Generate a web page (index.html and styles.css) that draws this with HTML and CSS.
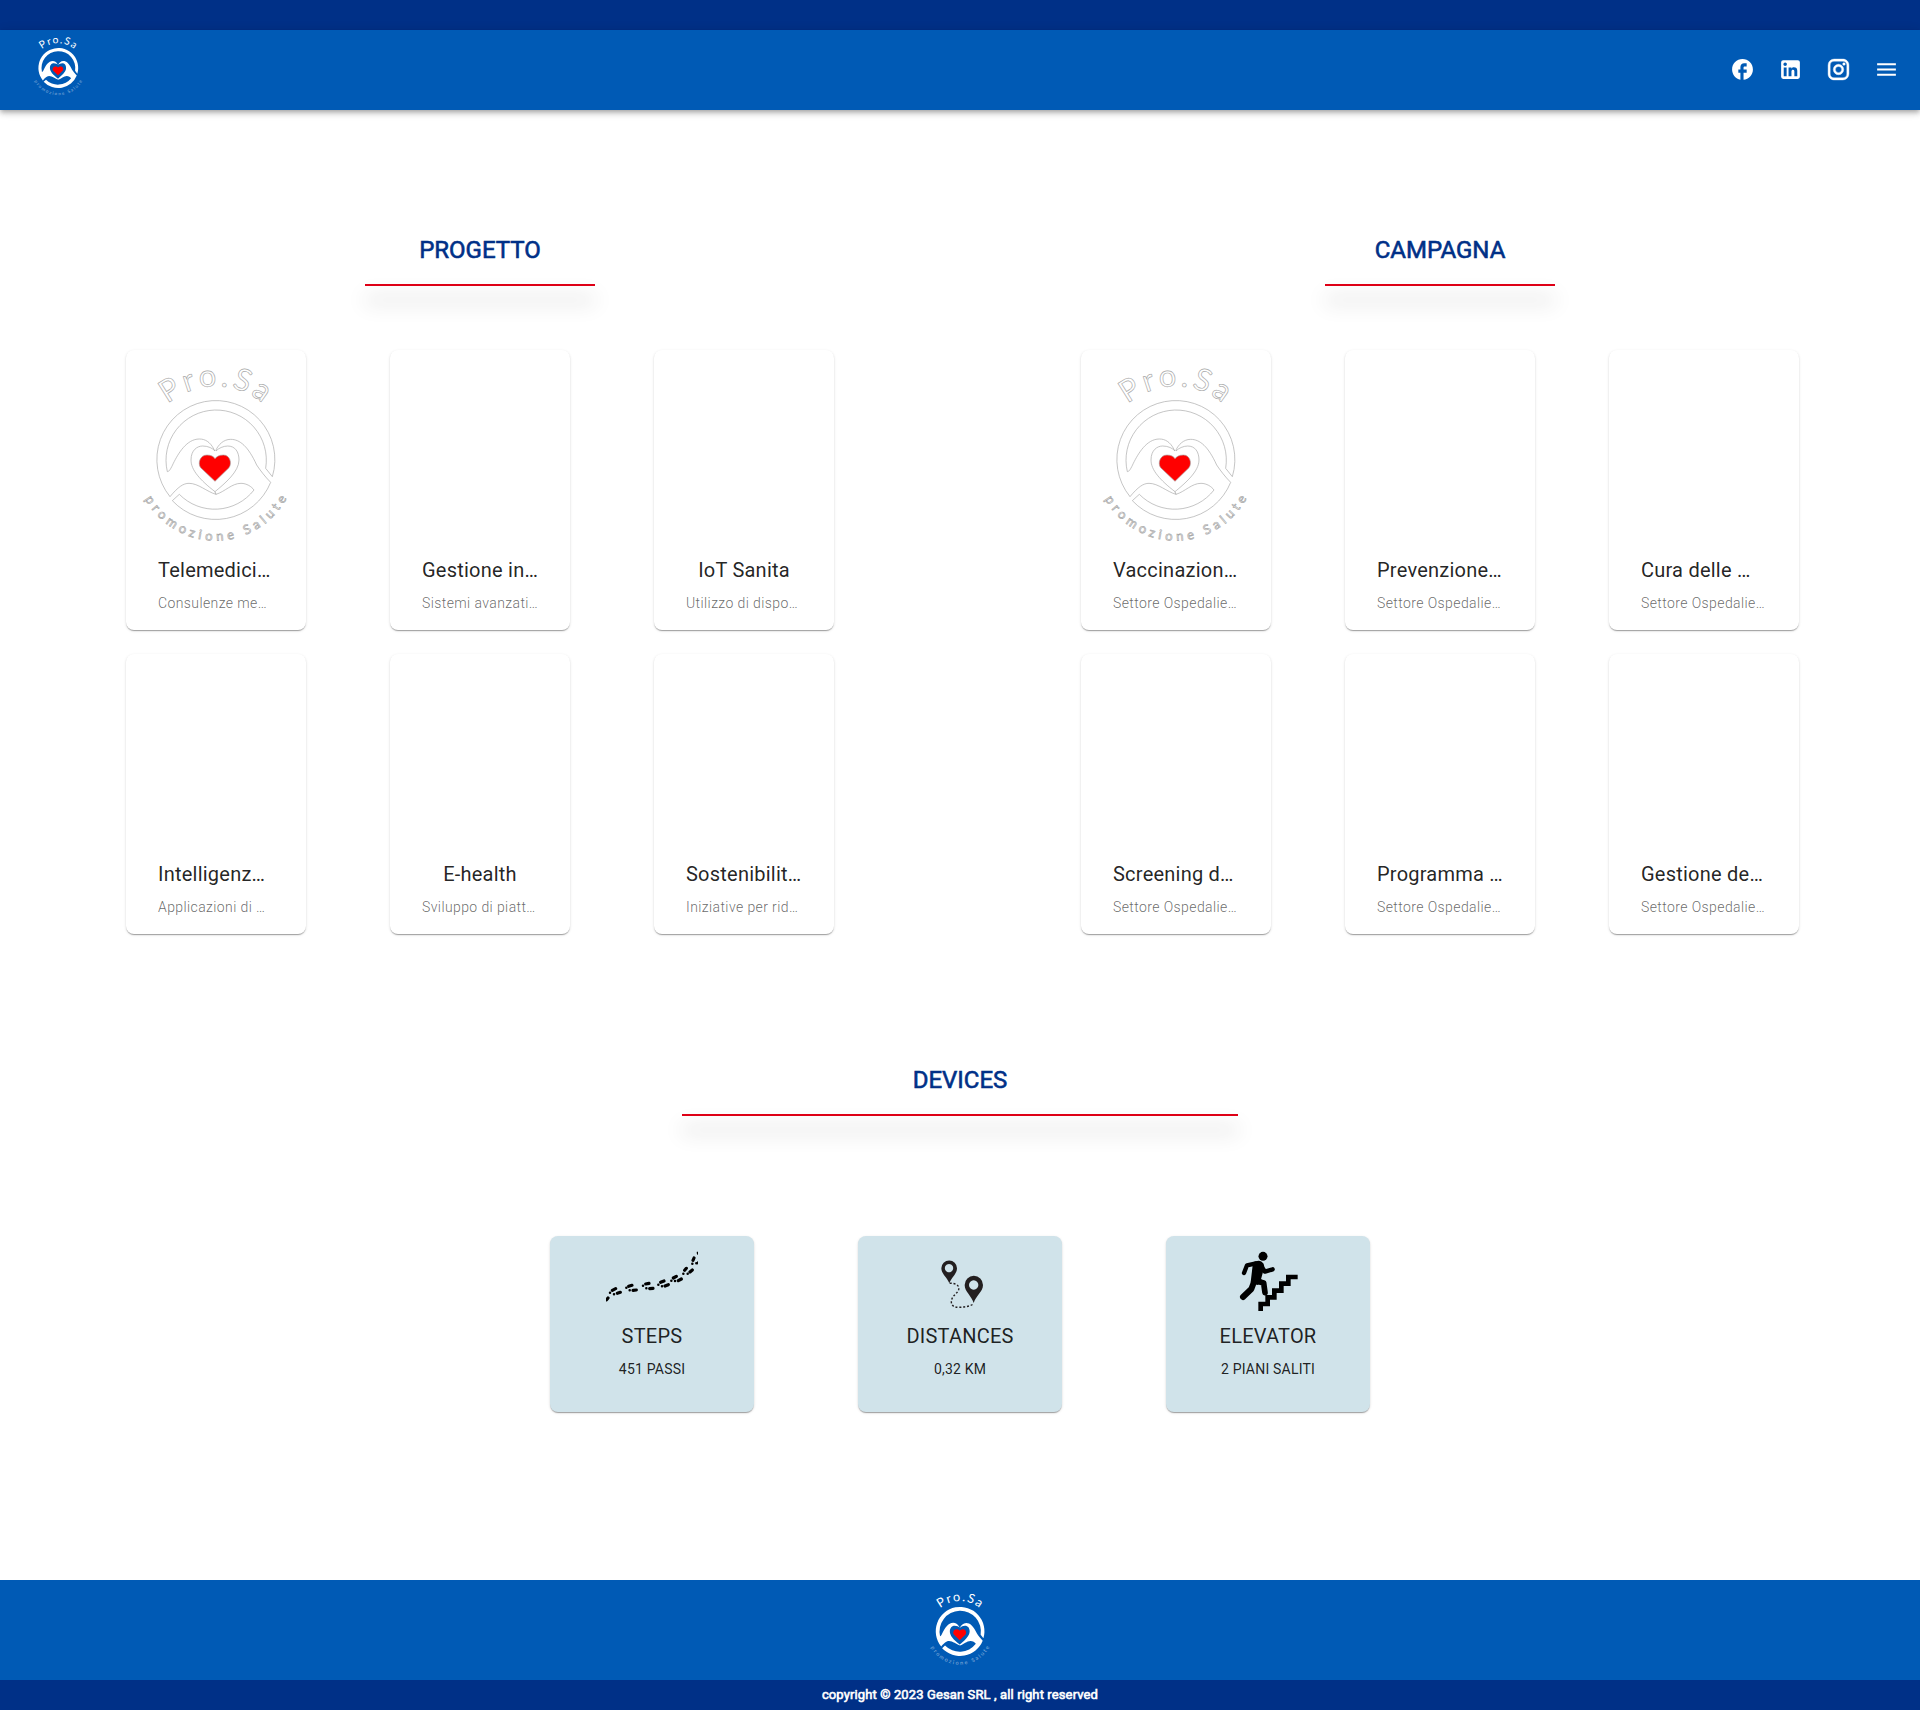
FILE: index.html
```html
<!DOCTYPE html>
<html lang="it">
<head>
<meta charset="utf-8">
<title>Pro.Sa</title>
<link rel="stylesheet" href="styles.css">
</head>
<body>
<svg class="defs" width="0" height="0" aria-hidden="true">
  <defs>
    <path id="arc-top" d="M96 360A221 221 0 0 1 538 360"/>
    <path id="arc-bottom" d="M75 360A242 242 0 0 0 559 360"/>
    <symbol id="logo" viewBox="48 30 540 600" overflow="visible">
      <path class="mark" d="M487 410A177 177 0 1 0 180 470C205 440 220 430 237 430C265 430 290 455 318 463L315 455C270 420 243 390 243 360C243 330 262 318 278 318C295 318 308 325 315 333L312 328C300 305 285 297 268 297C230 297 205 340 190 370C183 385 178 395 172 395A150.500 150.500 0 1 1 467 385Z"/>
      <path class="mark" d="M318 463C345 455 365 430 393 430C410 430 425 440 432 450A149 149 0 0 1 208 463L187 482A178 178 0 0 0 482 427C465 410 450 390 440 375C415 320 390 298 362 298C340 298 325 315 318 330L318 333C325 325 340 318 353 318C375 318 387 335 387 360C387 395 345 430 315 455Z"/>
      <path fill="#f00" d="M315 424L272 383C262 370 270 345 291 345C303 345 312 350 315 356C319 350 328 345 340 345C360 345 367 370 357 383Z"/>
      <text class="mark name"><textPath href="#arc-top" startOffset="50.500%">Pro.Sa</textPath></text>
      <text class="mark motto"><textPath href="#arc-bottom" startOffset="51%">promozione Salute</textPath></text>
    </symbol>
  </defs>
</svg>

<div class="topbar"></div>
<header class="header">
  <svg class="logo logo-header"><use href="#logo"/></svg>
  <nav class="social">
    <svg viewBox="0 0 24 24"><path d="M22 12c0-5.52-4.48-10-10-10S2 6.48 2 12c0 4.84 3.44 8.87 8 9.8V15H8v-3h2V9.5C10 7.57 11.57 6 13.5 6H16v3h-2c-.55 0-1 .45-1 1v2h3v3h-3v6.95c5.05-.5 9-4.76 9-9.95z"/></svg>
    <svg viewBox="0 0 24 24"><path d="M19 3a2 2 0 0 1 2 2v14a2 2 0 0 1-2 2H5a2 2 0 0 1-2-2V5a2 2 0 0 1 2-2h14m-.5 15.5v-5.3a3.26 3.26 0 0 0-3.26-3.26c-.85 0-1.84.52-2.32 1.3v-1.11h-2.79v8.37h2.79v-4.93c0-.77.62-1.4 1.39-1.4a1.4 1.4 0 0 1 1.4 1.4v4.93h2.79M6.88 8.56a1.68 1.68 0 0 0 1.68-1.68c0-.93-.75-1.69-1.68-1.69a1.69 1.69 0 0 0-1.69 1.69c0 .93.76 1.68 1.69 1.68m1.39 9.94v-8.37H5.5v8.37h2.77z"/></svg>
    <svg class="instagram" viewBox="0 0 24 24"><path d="M7.8 2h8.4C19.4 2 22 4.6 22 7.8v8.4a5.8 5.8 0 0 1-5.8 5.8H7.8C4.6 22 2 19.4 2 16.2V7.8A5.8 5.8 0 0 1 7.8 2m-.2 2A3.6 3.6 0 0 0 4 7.6v8.8C4 18.39 5.61 20 7.6 20h8.8a3.6 3.6 0 0 0 3.6-3.6V7.6C20 5.61 18.39 4 16.4 4H7.6m9.65 1.5a1.25 1.25 0 0 1 1.25 1.25A1.25 1.25 0 0 1 17.25 8 1.25 1.25 0 0 1 16 6.75a1.25 1.25 0 0 1 1.25-1.25M12 7a5 5 0 0 1 5 5 5 5 0 0 1-5 5 5 5 0 0 1-5-5 5 5 0 0 1 5-5m0 2a3 3 0 0 0-3 3 3 3 0 0 0 3 3 3 3 0 0 0 3-3 3 3 0 0 0-3-3z"/></svg>
    <svg viewBox="0 0 24 24"><path d="M3 18h18v-2H3v2zm0-5h18v-2H3v2zm0-7v2h18V6H3z"/></svg>
  </nav>
</header>

<main>
  <div class="columns">
    <section class="column">
      <h2 class="heading">PROGETTO</h2>
      <div class="cards">
        <article class="card"><div class="media"><svg class="logo logo-card"><use href="#logo"/></svg></div><h3>Telemedici…</h3><p>Consulenze me…</p></article>
        <article class="card"><div class="media"></div><h3>Gestione in…</h3><p>Sistemi avanzati…</p></article>
        <article class="card"><div class="media"></div><h3 class="short">IoT Sanita</h3><p>Utilizzo di dispo…</p></article>
        <article class="card"><div class="media"></div><h3>Intelligenz…</h3><p>Applicazioni di …</p></article>
        <article class="card"><div class="media"></div><h3 class="short">E-health</h3><p>Sviluppo di piatt…</p></article>
        <article class="card"><div class="media"></div><h3>Sostenibilit…</h3><p>Iniziative per rid…</p></article>
      </div>
    </section>
    <section class="column wide">
      <h2 class="heading">CAMPAGNA</h2>
      <div class="cards">
        <article class="card"><div class="media"><svg class="logo logo-card"><use href="#logo"/></svg></div><h3>Vaccinazion…</h3><p>Settore Ospedalie…</p></article>
        <article class="card"><div class="media"></div><h3>Prevenzione…</h3><p>Settore Ospedalie…</p></article>
        <article class="card"><div class="media"></div><h3>Cura delle …</h3><p>Settore Ospedalie…</p></article>
        <article class="card"><div class="media"></div><h3>Screening d…</h3><p>Settore Ospedalie…</p></article>
        <article class="card"><div class="media"></div><h3>Programma …</h3><p>Settore Ospedalie…</p></article>
        <article class="card"><div class="media"></div><h3>Gestione de…</h3><p>Settore Ospedalie…</p></article>
      </div>
    </section>
  </div>

  <section class="devices">
    <h2 class="heading heading-wide">DEVICES</h2>
    <div class="device-list">
      <article class="device">
        <svg class="device-icon" viewBox="30 33 612 240">
          <svg x="198" y="80" width="276" height="150" viewBox="198 80 276 150">
            <g class="soles">
              <path d="M199 225l5-6M217 196l10-5M232 205l9-3M266 184l10-3M279 196l10-1M317 177l10-2M329 191l10-1M362 172l10-4M375 183l10-4M400 159l9-5M415 167l9-5M434 136l5-6M450 141l7-6M459 106l3-7M475 85v-4M475 114l3-4"/>
            </g>
            <g class="heels">
              <path d="M210 203h.1M222 208h.1M259 188h.1M269 196h.1M309 182h.1M319 190h.1M355 179h.1M366 184h.1M394 167h.1M405 168h.1M430 146h.1M443 146h.1M457 116h.1M469 115h.1"/>
            </g>
          </svg>
        </svg>
        <h3>STEPS</h3><p>451 PASSI</p>
      </article>
      <article class="device">
        <svg class="device-icon" viewBox="24 33 612 240">
          <path fill="#231f20" fill-rule="evenodd" d="M298 175C292 158 274 146 274 130a23.500 23.500 0 0 1 47 0C321 146 304 158 298 175zM297 117a12.500 12.500 0 1 0 .1 0z"/>
          <path fill="#231f20" fill-rule="evenodd" d="M371 234C365 213 344 200 344 180a27.500 27.500 0 0 1 55 0C399 200 377 213 371 234zM371 166a14 14 0 1 0 .1 0z"/>
          <path fill="none" stroke="#231f20" stroke-width="4.200" stroke-dasharray="6 5.500" d="M299 175C315 174 329 180 326 194C322 206 305 212 304 230C304 243 313 247 327 247C348 246 365 243 371 235"/>
        </svg>
        <h3>DISTANCES</h3><p>0,32 KM</p>
      </article>
      <article class="device">
        <svg class="device-icon" viewBox="48 33 612 240">
          <circle cx="339" cy="94" r="13.500"/>
          <g fill="none" stroke="#000" stroke-linecap="round" stroke-linejoin="round">
            <path stroke-width="13" d="M318 115L291 121L282 144M332 121L345 140L368 133"/>
            <path stroke-width="18" d="M313 168L304 192L279 216"/>
            <path stroke-width="17" d="M318 168L341 174L345 203"/>
          </g>
          <path d="M309 112Q325 104 335 110Q345 116 342 130L333 163L344 168L322 180L302 172Z"/>
          <path fill="none" stroke="#000" stroke-width="14" d="M332 258V237H353V217H373V197H394V176H415V156H443"/>
        </svg>
        <h3>ELEVATOR</h3><p>2 PIANI SALITI</p>
      </article>
    </div>
  </section>
</main>

<footer>
  <div class="footer-main"><svg class="logo logo-footer"><use href="#logo"/></svg></div>
  <div class="copyright">copyright © 2023 Gesan SRL , all right reserved</div>
</footer>
</body>
</html>
```
FILE: styles.css
```css
* { box-sizing: border-box; }
body {
  margin: 0;
  min-height: 1710px;
  display: flex;
  flex-direction: column;
  background: #fff;
  color: rgba(0, 0, 0, .87);
  font-family: Roboto, "Liberation Sans", sans-serif;
}
h2, h3, p { margin: 0; font-weight: 400; }
svg { display: block; flex: none; }
.defs { position: absolute; }

.topbar { height: 30px; background: #003087; }
.header {
  height: 80px;
  padding: 0 21px 0 28px;
  display: flex;
  justify-content: space-between;
  align-items: center;
  background: #005ab5;
  box-shadow: 0 2px 4px -1px rgba(0,0,0,.2), 0 4px 5px rgba(0,0,0,.14), 0 1px 10px rgba(0,0,0,.12);
}
.social { display: flex; gap: 23px; margin-bottom: 1px; }
.social svg { width: 25px; height: 25px; fill: #fff; }
.social .instagram { stroke: #fff; stroke-width: .4px; }

.logo { overflow: visible; color: #fff; }
.logo-header { width: 60.700px; height: 67.400px; margin-bottom: 10px; }
.logo-footer { width: 74.300px; height: 82.600px; }
.logo-card { width: 180px; height: 200px; }
.mark { fill: #fff; }
.name, .motto { font-family: Lato, sans-serif; text-anchor: middle; }
.name { font-size: 92px; letter-spacing: 11px; }
.motto { font-size: 39px; letter-spacing: 12.500px; }
.logo-header, .logo-footer { --motto: .5; }
.motto { opacity: var(--motto, 1); }
.logo-card { stroke: #a8a8a8; stroke-width: 2px; }

.columns { display: grid; grid-template-columns: 1fr 1fr; padding-top: 120px; }
.column { display: flex; flex-direction: column; align-items: center; }
.heading {
  width: 230px;
  height: 56px;
  padding-top: 5px;
  color: #003087;
  font-size: 24px;
  line-height: 30px;
  text-align: center;
  -webkit-text-stroke: .6px #003087;
}
.heading::after {
  content: "";
  display: block;
  height: 2px;
  margin-top: 19px;
  background: #de0016;
  box-shadow: 0 15px 20px rgba(0,0,0,.45);
}
.heading-wide { width: 556px; }

.cards {
  width: 792px;
  margin-top: 64px;
  display: grid;
  grid-template-columns: repeat(3, 264px);
  justify-items: center;
  row-gap: 24px;
}
.card, .device {
  border-radius: 8px;
  box-shadow: 0 2px 1px -1px rgba(0,0,0,.2), 0 1px 1px rgba(0,0,0,.14), 0 1px 3px rgba(0,0,0,.12);
}
.card { width: 180px; height: 280px; background: #fff; }
.wide .card { width: 190px; }
.media { height: 200px; display: flex; justify-content: center; }
h3, p { white-space: nowrap; }
h3 { font-size: 20px; line-height: 32px; letter-spacing: .23px; }
p { font-size: 14px; line-height: 20px; letter-spacing: .2px; }
.card h3 { margin: 4px 32px 7px; }
.card .short { text-align: center; }
.card p { margin: 0 32px; color: rgba(0,0,0,.6); font-weight: 300; letter-spacing: .4px; }

.devices { padding-top: 126px; display: flex; flex-direction: column; align-items: center; }
.device-list { display: flex; gap: 104px; margin-top: 120px; }
.device { width: 204px; height: 176px; background: #d0e3ea; text-align: center; }
.device-icon { width: 204px; height: 80px; }
.device h3 { margin: 4px 0 7px; }
.soles, .heels { stroke: #000; stroke-linecap: round; fill: none; }
.soles { stroke-width: 9.500px; }
.heels { stroke-width: 7.500px; }

footer { margin-top: auto; }
.footer-main { height: 100px; display: flex; justify-content: center; padding-top: 6px; background: #005ab5; }
.copyright {
  height: 30px;
  background: #003087;
  color: #fff;
  font-size: 13px;
  line-height: 30px;
  letter-spacing: .12px;
  text-align: center;
  -webkit-text-stroke: .6px #fff;
}
```
